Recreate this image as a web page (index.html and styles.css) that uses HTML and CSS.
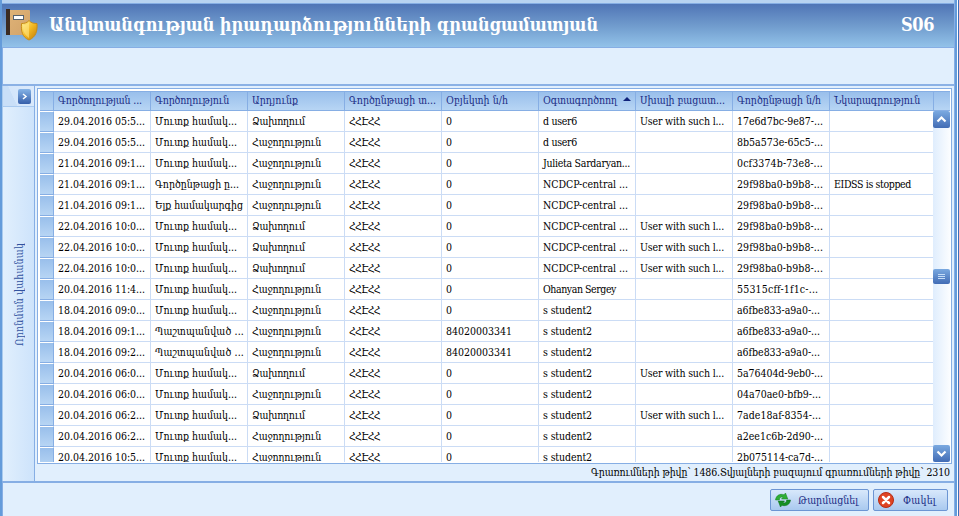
FILE: index.html
```html
<!DOCTYPE html>
<html lang="hy">
<head>
<meta charset="utf-8">
<title>Անվտանգության իրադարձությունների գրանցամատյան</title>
<link rel="stylesheet" href="styles.css">
</head>
<body>
<div class="window">
  <header class="titlebar">
    <svg class="logo" width="34" height="34" viewBox="0 0 34 34">
      <defs>
        <linearGradient id="book" x1="0" y1="0" x2="1" y2="1"><stop offset="0" stop-color="#dfb377"/><stop offset="1" stop-color="#d2a36a"/></linearGradient>
        <linearGradient id="shield" x1="0" y1="0" x2="1" y2="1"><stop offset="0" stop-color="#fff3a0"/><stop offset=".5" stop-color="#f2b822"/><stop offset="1" stop-color="#c07a08"/></linearGradient>
      </defs>
      <rect x="4" y="1" width="21" height="25" rx="1" fill="url(#book)"/>
      <rect x="1" y="0" width="4" height="26" fill="#3b2b22"/>
      <rect x="8.500" y="6.500" width="10" height="4" fill="#fff" stroke="#56626e"/>
      <path d="M24 11.500C22 14 19 14.500 16.500 14.500 16 22 17 28 24 31 31 28 32.500 22 32 14.500 29 14.500 26 14 24 11.500Z" fill="url(#shield)" stroke="#c98c15"/>
      <path d="M24 13C22 15.500 20 16 18 16 18 22 19 25 24 29Z" fill="#ffe98a" opacity=".55"/>
    </svg>
    <h1 class="title" data-width="549">Անվտանգության իրադարձությունների գրանցամատյան</h1>
    <span class="code" data-width="33">S06</span>
  </header>
  <div class="toolbar"></div>
  <div class="main">
    <aside class="side">
      <div class="side-head"><button class="expand" aria-label="Expand"><svg width="13" height="15" viewBox="0 0 13 15"><path d="M5 5l3 2.500-3 2.500" fill="none" stroke="#fff" stroke-width="1.500"/></svg></button></div>
      <div class="side-body"><span class="side-label" data-width="103">Որոնման վահանակ</span></div>
    </aside>
    <section class="content">
      <div class="grid">
        <div class="grid-head" id="head"></div>
        <div class="grid-body">
          <div class="rows" id="rows"></div>
          <div class="scroll">
            <span class="sbtn"><svg width="17" height="17" viewBox="0 0 17 17"><path d="M4.500 10.500l4-4 4 4" fill="none" stroke="#fff" stroke-width="2.200"/></svg></span>
            <span class="sbtn thumb"><svg width="17" height="15" viewBox="0 0 17 15"><path d="M5 5.500h7M5 7.500h7M5 9.500h7" stroke="#c4dcf6"/></svg></span>
            <span class="sbtn"><svg width="17" height="17" viewBox="0 0 17 17"><path d="M4.500 6.500l4 4 4-4" fill="none" stroke="#fff" stroke-width="2.200"/></svg></span>
          </div>
        </div>
      </div>
      <div class="status"><span data-width="359">Գրառումների թիվը՝ 1486.Տվյալների բազայում գրառումների թիվը՝ 2310</span></div>
    </section>
  </div>
  <footer class="footer">
    <button class="btn refresh">
      <svg width="16" height="16" viewBox="0 0 16 16"><path d="M0.500 8C1 3.500 5 1.200 9 2.800L10.500 1 12.800 7H6.500L8 5.200C6 4.600 4.500 5.800 4.300 8Z" fill="#2fae35" stroke="#14801f" stroke-width=".5"/><path d="M15.500 8C15 12.500 11 14.800 7 13.200L5.500 15 3.200 9H9.500L8 10.800C10 11.400 11.500 10.200 11.700 8Z" fill="#149023" stroke="#0b6a18" stroke-width=".5"/></svg>
      <span data-width="60">Թարմացնել</span></button>
    <button class="btn close">
      <svg width="16" height="16" viewBox="0 0 16 16"><circle cx="8" cy="8" r="7.500" fill="#df4423" stroke="#b52c16"/><path d="M5 5l6 6M11 5l-6 6" stroke="#fff" stroke-width="2.500" stroke-linecap="round"/></svg>
      <span data-width="33">Փակել</span></button>
  </footer>
</div>
<script src="grid.js"></script>
</body>
</html>
```
FILE: styles.css
```css
* { box-sizing: border-box; }
body { margin: 0; font-family: "DejaVu Serif Condensed", "DejaVu Serif", serif; font-size: 10.5px; color: #000; overflow: hidden; }
button { font: inherit; margin: 0; padding: 0; }
svg { display: block; flex: none; }
[data-width] { white-space: pre; }
.window { width: 959px; height: 516px; display: flex; flex-direction: column; background: #e1effd; border-left: 2px solid #649bda; border-right: 1px solid #3f6eb7; box-shadow: inset -1px 0 #fff, inset -3px 0 #649bda, inset -4px 0 #86aee4; }
.titlebar { height: 48px; margin-right: 4px; border-top: 3px solid #b8d3f1; border-bottom: 1px solid #86aee4; display: flex; align-items: center; background: linear-gradient(#86aee4 1px, #5075b6 1px, #6f9acc 50%, #92c2e9); color: #fff; padding: 0 20px 0 3px; }
.logo { margin-top: 2px; }
.title { margin: 0 auto 0 10px; font-size: 18px; font-weight: bold; line-height: 24px; }
.code { font-size: 18px; font-weight: bold; line-height: 24px; }
.toolbar { height: 38px; margin-right: 4px; border-left: 1px solid #86aee4; border-bottom: 2px solid #8bb1e5; background: #e1effd; }
.main { height: 397px; margin-right: 4px; display: flex; border-bottom: 2px solid #86aee4; }
.side { width: 33px; display: flex; flex-direction: column; border-right: 1px solid #86aee4; border-left: 1px solid #a9caee; background: linear-gradient(90deg, #e1effd, #cde3fb); }
.side-head { height: 21px; display: flex; justify-content: flex-end; padding: 3px 3px 0; border-bottom: 1px solid #a9caf0; background: linear-gradient(65deg, #c9dff8 35%, #d4e6fb 36%, #dceafb); }
.expand { width: 13px; height: 15px; border: 0; border-radius: 2px; background: linear-gradient(#86b4e7, #365faa); }
.side-body { flex: 1; display: flex; justify-content: center; align-items: flex-start; padding-top: 136px; }
.side-label { writing-mode: vertical-rl; transform: rotate(180deg); color: #31539f; line-height: 14px; }
.content { flex: 1; padding: 2px 2px 0; }
.grid { width: 915px; height: 376px; padding: 2px 1px 1px 2px; border: 1px solid #86aee4; background: #fff; }
.grid-head { height: 20px; display: flex; border-top: 1px solid #86aee4; border-bottom: 1px solid #86aee4; background: linear-gradient(#99bfeb, #b7d5f4); color: #1a2b84; }
.grid-head .cell { border-color: #86aee4; line-height: 17px; }
.corner, .mark { width: 14px; flex: none; border-right: 1px solid #86aee4; }
.grid-body { height: 351px; display: flex; }
.rows { width: 893px; flex: none; height: 351px; overflow: hidden; }
.row { display: flex; height: 21px; }
.mark { border-bottom: 1px solid #86aee4; border-top: 1px solid #fff; background: linear-gradient(#99bfeb, #b7d5f4); }
.cell { width: 97px; flex: none; padding-left: 4px; border-right: 1px solid #cbdcf5; border-bottom: 1px solid #cbdcf5; line-height: 21px; white-space: pre; overflow: hidden; }
.grid-head .cell { border-bottom: 0; }
.cell:last-child, .cell.last { width: 104px; }
.grid-head .sorted { display: flex; gap: 6px; }
.arrow { width: 8px; height: 4px; margin-top: 5px; background: #10237b; clip-path: polygon(50% 0, 100% 100%, 0 100%); }
.scroll { width: 17px; display: flex; flex-direction: column; justify-content: space-between; background: linear-gradient(90deg, #dfedfd, #fbfdff); }
.sbtn { width: 17px; height: 17px; border-radius: 2px; background: linear-gradient(#7aa9e0, #426cb5); }
.thumb { height: 15px; margin-top: 122px; margin-bottom: 143px; }
.status { height: 17px; display: flex; justify-content: flex-end; padding-right: 2px; line-height: 16px; }
.footer { flex: 1; display: flex; justify-content: flex-end; gap: 4px; margin-right: 4px; padding: 6px 6px 0 0; border-left: 1px solid #86aee4; }
.btn { height: 22px; display: flex; align-items: center; border: 1px solid #6c95d3; border-radius: 2px; background: linear-gradient(#d8e8fb, #a9c9ef); color: #1a2b84; }
.refresh { width: 99px; padding-left: 4px; gap: 7px; }
.close { width: 75px; padding-left: 4px; gap: 9px; }
```
FILE: grid.js
```js
const headers = ["Գործողության ...", "Գործողություն", "Արդյունք", "Գործընթացի տ...", "Օբյեկտի ն/հ", "Օգտագործոող", "Սխալի բացատ...", "Գործընթացի ն/հ", "Նկարագրություն"];
const headerWidths = [84, 74, 46, 87, 62, 74, 85, 84, 86];

const login = "Մուտք համակ...", ok = "Հաջողություն", fail = "Ձախողում";
const center = "NCDCP-central ...", err = "User with such l...";
const site = "ՀՀԷՀՀ";
const id29 = "29f98ba0-b9b8-...", idA6 = "a6fbe833-a9a0-...";
const records = [
  ["29.04.2016 05:5...", login, fail, site, "0", "d user6", err, "17e6d7bc-9e87-...", ""],
  ["29.04.2016 05:5...", login, ok, site, "0", "d user6", "", "8b5a573e-65c5-...", ""],
  ["21.04.2016 09:1...", login, ok, site, "0", "Julieta Sardaryan...", "", "0cf3374b-73e8-...", ""],
  ["21.04.2016 09:1...", "Գործընթացի ը...", ok, site, "0", center, "", id29, "EIDSS is stopped"],
  ["21.04.2016 09:1...", "Ելք համակարգից", ok, site, "0", center, "", id29, ""],
  ["22.04.2016 10:0...", login, fail, site, "0", center, err, id29, ""],
  ["22.04.2016 10:0...", login, fail, site, "0", center, err, id29, ""],
  ["22.04.2016 10:0...", login, fail, site, "0", center, err, id29, ""],
  ["20.04.2016 11:4...", login, ok, site, "0", "Ohanyan Sergey", "", "55315cff-1f1c-...", ""],
  ["18.04.2016 09:0...", login, ok, site, "0", "s student2", "", idA6, ""],
  ["18.04.2016 09:1...", "Պաշտպանված ...", ok, site, "84020003341", "s student2", "", idA6, ""],
  ["18.04.2016 09:2...", "Պաշտպանված ...", ok, site, "84020003341", "s student2", "", idA6, ""],
  ["20.04.2016 06:0...", login, fail, site, "0", "s student2", err, "5a76404d-9eb0-...", ""],
  ["20.04.2016 06:0...", login, ok, site, "0", "s student2", "", "04a70ae0-bfb9-...", ""],
  ["20.04.2016 06:2...", login, fail, site, "0", "s student2", err, "7ade18af-8354-...", ""],
  ["20.04.2016 06:2...", login, ok, site, "0", "s student2", "", "a2ee1c6b-2d90-...", ""],
  ["20.04.2016 10:5...", login, ok, site, "0", "s student2", "", "2b075114-ca7d-...", ""]
];
const textWidths = {
  [login]: 82, "Գործընթացի ը...": 84, "Ելք համակարգից": 88, "Պաշտպանված ...": 89,
  [fail]: 53, [ok]: 69, [site]: 31, "84020003341": 66,
  "d user6": 34, "Julieta Sardaryan...": 87, [center]: 85, "Ohanyan Sergey": 73, "s student2": 49,
  [err]: 84, "55315cff-1f1c-...": 81, [idA6]: 83, "04a70ae0-bfb9-...": 84, "7ade18af-8354-...": 84,
  "EIDSS is stopped": 77
};

function cell(text, width, cls) {
  const el = document.createElement("div");
  el.className = "cell" + (cls ? " " + cls : "");
  const span = document.createElement("span");
  span.textContent = text;
  if (width) span.dataset.width = width;
  el.append(span);
  return el;
}

function box(cls) {
  const el = document.createElement("div");
  el.className = cls;
  return el;
}

const head = document.getElementById("head");
head.append(box("corner"));
headers.forEach((text, i) => {
  const el = cell(text, headerWidths[i], i === 8 ? "last" : i === 5 ? "sorted" : "");
  if (i === 5) el.append(box("arrow"));
  head.append(el);
});

const rows = document.getElementById("rows");
records.forEach(record => {
  const row = box("row");
  row.append(box("mark"));
  record.forEach((text, i) => row.append(cell(text, text.length > 1 ? textWidths[text] || (i === 0 ? 87 : 86) : 0)));
  rows.append(row);
});

document.querySelectorAll("[data-width]").forEach(el => {
  const r = el.getBoundingClientRect();
  const natural = Math.max(r.width, el.classList.contains("side-label") ? r.height : 0);
  el.style.letterSpacing = ((el.dataset.width - natural) / el.textContent.length) + "px";
});
```
